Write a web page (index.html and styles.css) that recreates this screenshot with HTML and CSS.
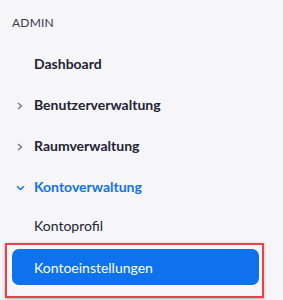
FILE: index.html
```html
<!DOCTYPE html>
<html>
<head>
  <title>Admin</title>
  <link rel="stylesheet" href="styles.css">
</head>
<body>
  <nav class="sidebar">
    <div class="section-title">ADMIN</div>
    <ul class="menu">
      <li class="item"><span class="caret"></span>Dashboard</li>
      <li class="item">
        <span class="caret"><svg width="6" height="8" viewBox="0 0 6 8"><path d="M1 1l3.5 3L1 7" fill="none" stroke="#747487" stroke-width="1.4"/></svg></span>Benutzerverwaltung
      </li>
      <li class="item">
        <span class="caret"><svg width="6" height="8" viewBox="0 0 6 8"><path d="M1 1l3.5 3L1 7" fill="none" stroke="#747487" stroke-width="1.4"/></svg></span>Raumverwaltung
      </li>
      <li class="item open">
        <span class="caret down"><svg width="9" height="6" viewBox="0 0 9 6"><path d="M1 1.2l3.5 3.3L8 1.2" fill="none" stroke="#0e72ed" stroke-width="1.4"/></svg></span>Kontoverwaltung
      </li>
      <li class="sub">Kontoprofil</li>
      <li class="sub active">Kontoeinstellungen</li>
    </ul>
  </nav>
</body>
</html>
```

FILE: styles.css
```css
body {
  margin: 0;
  background: #f6f6f9;
  font-family: Lato, "Open Sans", sans-serif;
  color: #232333;
}

.sidebar {
  padding: 15px 24px 20px 12px;
}

.section-title {
  font-size: 12px;
  line-height: 16px;
  color: #39394d;
  letter-spacing: 0.2px;
}

.menu {
  list-style: none;
  margin: 12px 0 0;
  padding: 0;
}

.item {
  display: flex;
  align-items: center;
  height: 41px;
  font-size: 14px;
  font-weight: 700;
}

.item.open {
  color: #0e72ed;
}

.caret {
  width: 22px;
  flex: none;
  display: flex;
  padding-left: 5px;
  box-sizing: border-box;
  margin-top: 2px;
}

.caret.down {
  padding-left: 4px;
}

.sub {
  display: flex;
  align-items: center;
  height: 36px;
  padding-left: 22px;
  font-size: 14px;
  font-weight: 400;
  color: #232333;
}

.sub + .sub {
  margin-top: 6px;
}

.sub.active {
  position: relative;
  background: #0e72ed;
  color: #fff;
  border-radius: 7px;
}

/* red highlight frame drawn over the active entry */
.sub.active::after {
  content: "";
  position: absolute;
  left: -7px;
  right: -5px;
  top: -6px;
  bottom: -13px;
  border: 2px solid #e8414a;
  box-shadow: 0 1px 3px rgba(0, 0, 0, 0.3);
}
```
